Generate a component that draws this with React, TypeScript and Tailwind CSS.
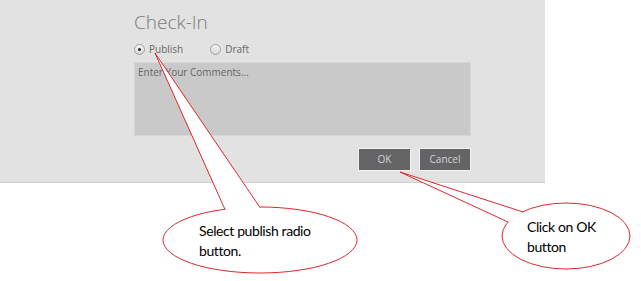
import React from "react";

const Radio = ({ checked, label }: { checked?: boolean; label: string }) => (
  <label className="flex items-center gap-[4px] text-[10px] text-[#666]">
    <span className="w-[11px] h-[11px] rounded-full border border-[#a0a0a0] bg-gradient-to-b from-[#f6f6f6] to-[#d6d6d6] flex items-center justify-center">
      {checked && <span className="w-[3px] h-[3px] rounded-full bg-[#222]" />}
    </span>
    {label}
  </label>
);

const Callouts = () => (
  <svg className="absolute inset-0 pointer-events-none" width={641} height={281}>
    <ellipse cx={260} cy={240} rx={97} ry={33} fill="#fff" stroke="#e0272b" strokeWidth={1} />
    <polygon points="225,209.5 155,53 260,207.5 242,214" fill="#fff" />
    <polyline points="225,209.5 155,53 260,207.5" fill="none" stroke="#e0272b" strokeWidth={1} />

    <ellipse cx={566} cy={236} rx={64} ry={33} fill="#fff" stroke="#e0272b" strokeWidth={1} />
    <polygon points="523,212 400,172 508,222 516,218" fill="#fff" />
    <polyline points="523,212 400,172 508,222" fill="none" stroke="#e0272b" strokeWidth={1} />
  </svg>
);

export default function App() {
  return (
    <div className="relative w-[641px] h-[281px] bg-white overflow-hidden font-['Open_Sans',sans-serif]">
      <div className="w-[545px] h-[183px] bg-[#e2e2e2] border-b border-[#cfcfcf] pl-[134px] pt-[9px]">
        <div className="w-[337px] flex flex-col">
          <h1 className="text-[19px] font-light text-[#7a7a7a] leading-[26px]">Check-In</h1>
          <div className="flex items-center gap-[27px] mt-[6px] h-[16px]">
            <Radio checked label="Publish" />
            <Radio label="Draft" />
          </div>
          <div className="mt-[5px] h-[74px] bg-[#c9c9c9] border border-[#d6d6d6] px-[3px] py-[2px] text-[10px] text-[#666]">
            Enter Your Comments...
          </div>
          <div className="flex justify-end gap-[8px] mt-[12px]">
            <button className="w-[53px] h-[23px] bg-[#646466] border border-[#f2f2f2] text-[10px] text-[#d4d4d4]">OK</button>
            <button className="w-[52px] h-[23px] bg-[#646466] border border-[#f2f2f2] text-[10px] text-[#d4d4d4]">Cancel</button>
          </div>
        </div>
      </div>
      <Callouts />
      <div className="absolute left-[199px] top-[221px] text-[14px] tracking-[-0.4px] leading-[20px] text-black font-['Lato',sans-serif]">
        Select publish radio
        <br />
        button.
      </div>
      <div className="absolute left-[527px] top-[217px] text-[14px] tracking-[-0.4px] leading-[20px] text-black font-['Lato',sans-serif]">
        Click on OK
        <br />
        button
      </div>
    </div>
  );
}
